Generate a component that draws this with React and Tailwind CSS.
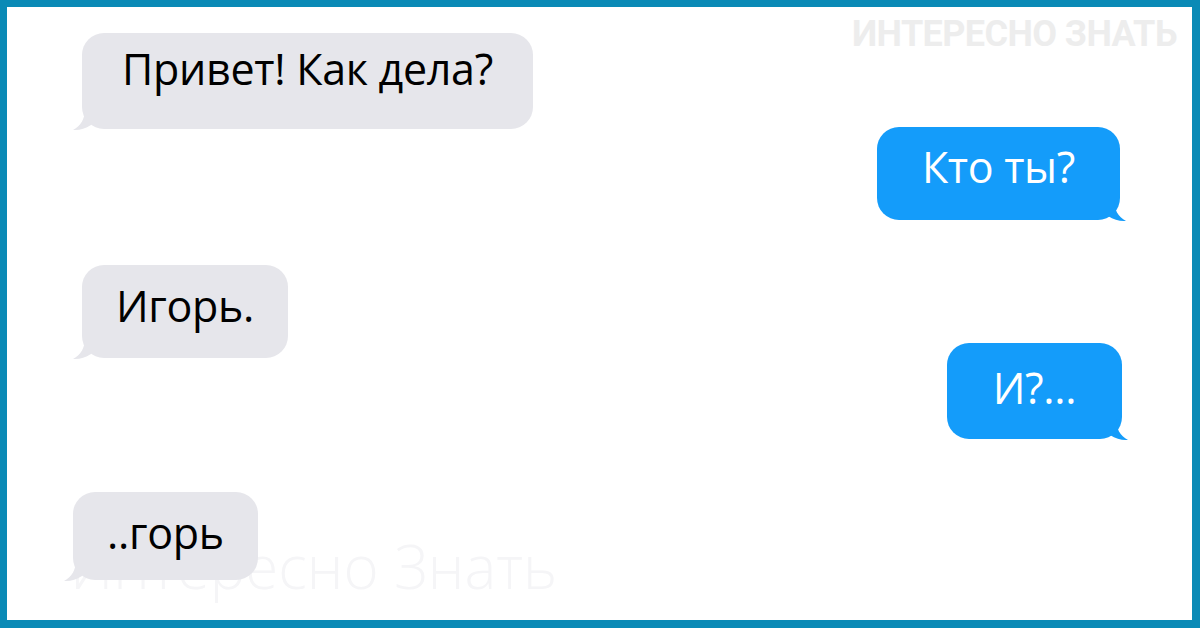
import React from "react";

const Tail = ({ side, color }) => {
  // little iMessage tail at the bottom corner of a bubble
  const left = side === "left";
  return (
    <svg
      width="18"
      height="22"
      viewBox="0 0 18 22"
      className={`absolute bottom-[-2px] ${left ? "left-[-9px]" : "right-[-6px] -scale-x-100"}`}
    >
      <path d="M12 0 C12 9 8 17 0 21 C6 21.5 12 20 18 16 L18 0 Z" fill={color} />
    </svg>
  );
};

const Bubble = ({ text, side, className }) => {
  const left = side === "left";
  const color = left ? "#e6e6eb" : "#149cfa";
  return (
    <div
      className={`relative z-10 flex items-center justify-center rounded-[22px] ${
        left ? "bg-[#e6e6eb] text-black" : "bg-[#149cfa] text-white"
      } ${className}`}
    >
      <Tail side={side} color={color} />
      <span className="leading-none whitespace-nowrap text-[43px] tracking-[-0.3px]">{text}</span>
    </div>
  );
};

const App = () => {
  return (
    <div
      className="relative w-[1200px] h-[628px] box-border border-[7px] border-r-[8px] border-b-[8px] border-[#0a8ab6] bg-white overflow-hidden"
      style={{ fontFamily: '"Open Sans", "Noto Sans", sans-serif' }}
    >
      {/* watermarks */}
      <div className="absolute top-[9px] left-[845px] text-[36px] font-bold leading-none text-[#ededed] tracking-[-0.6px] font-['Roboto',sans-serif]">
        ИНТЕРЕСНО ЗНАТЬ
      </div>
      <div className="absolute top-[529px] left-[63px] text-[60px] font-light leading-none text-[#f5f5f7] whitespace-nowrap">
        Интересно Знать
      </div>

      <div className="flex flex-col">
        <div className="flex justify-start mt-[26px] ml-[75px]">
          <Bubble side="left" text="Привет! Как дела?" className="w-[451px] h-[96px] pb-[26px]" />
        </div>
        <div className="flex justify-end -mt-[2px] mr-[72px]">
          <Bubble side="right" text="Кто ты?" className="w-[243px] h-[93px] pb-[15px]" />
        </div>
        <div className="flex justify-start mt-[45px] ml-[75px]">
          <Bubble side="left" text="Игорь." className="w-[206px] h-[93px] pb-[13px]" />
        </div>
        <div className="flex justify-end -mt-[15px] mr-[70px]">
          <Bubble side="right" text="И?..." className="w-[175px] h-[96px] pb-[7px]" />
        </div>
        <div className="flex justify-start mt-[53px] ml-[66px]">
          <Bubble side="left" text="..горь" className="w-[185px] h-[88px] pb-[8px]" />
        </div>
      </div>
    </div>
  );
};

export default App;
